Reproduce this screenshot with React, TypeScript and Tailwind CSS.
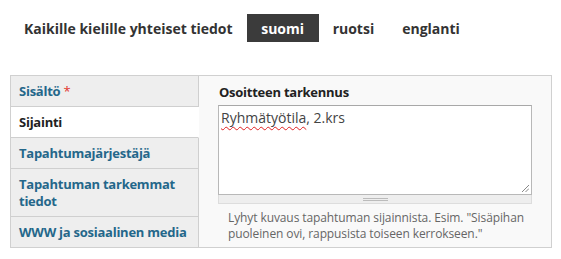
export default function App() {
  const tabs = [
    { label: "Sisältö", req: true },
    { label: "Sijainti", active: true },
    { label: "Tapahtumajärjestäjä" },
    { label: "Tapahtuman tarkemmat tiedot" },
    { label: "WWW ja sosiaalinen media" },
  ];
  return (
    <div className="w-[561px] h-[259px] bg-white font-['Open_Sans',sans-serif] overflow-hidden">
      <div className="flex items-center h-[28px] mt-[14px] pl-[24px] text-[14px] font-bold text-[#333]">
        <span>Kaikille kielille yhteiset tiedot</span>
        <span className="ml-[14px] h-full w-[72px] flex items-center justify-center bg-[#3b3b3b] text-white">suomi</span>
        <span className="ml-[14px]">ruotsi</span>
        <span className="ml-[28px]">englanti</span>
      </div>
      <div className="mt-[33px] ml-[10px] w-[542px] h-[173px] border border-[#d0d0d0] flex bg-[#f9f9f9]">
        <div className="w-[188px] flex flex-col shrink-0">
          {tabs.map((t, i) => (
            <div
              key={i}
              className={
                "pl-[8px] pr-[4px] pt-[7px] pb-[6px] text-[13px] leading-[17px] font-bold tracking-[-0.25px] " +
                (i < tabs.length - 1 ? "border-b border-[#cfcfcf] " : "") +
                (t.active
                  ? "bg-white text-[#222] border-r border-r-white"
                  : "bg-[#eeeeee] text-[#24678a] border-r border-r-[#cfcfcf]")
              }
            >
              {t.label}
              {t.req && <span className="text-[#e2342c] font-normal"> *</span>}
            </div>
          ))}
          <div className="flex-1 bg-[#eeeeee] border-r border-[#cfcfcf]" />
        </div>
        <div className="flex-1 pl-[19px] pr-[18px] pt-[8px]">
          <div className="text-[13px] leading-[17px] font-bold tracking-[-0.25px] text-[#222] mb-[4px] pl-[1px]">Osoitteen tarkennus</div>
          <div className="relative w-[314px] h-[90px] bg-white border border-[#b8b8b8] border-t-[#a8a8a8] px-[2px] pt-[2px] text-[14px] leading-[19px] text-[#444]">
            <span className="underline decoration-wavy decoration-[#e02020] decoration-[1px] underline-offset-[3px]">Ryhmätyötila</span>
            , 2.krs
            <svg className="absolute right-[2px] bottom-[2px]" width="8" height="8" viewBox="0 0 8 8">
              <line x1="1" y1="8" x2="8" y2="1" stroke="#888" strokeWidth="1" />
              <line x1="4.5" y1="8" x2="8" y2="4.5" stroke="#888" strokeWidth="1" />
            </svg>
          </div>
          <div className="w-[314px] h-[9px] bg-[#eeeeee] border border-t-0 border-[#dddddd] flex items-center justify-center">
            <div className="w-[25px] h-[3px] border-t border-b border-[#bbbbbb]" />
          </div>
          <div className="mt-[6px] pl-[10px] text-[12px] leading-[16px] tracking-[-0.1px] text-[#666]">
            Lyhyt kuvaus tapahtuman sijainnista. Esim. "Sisäpihan
            <br />
            puoleinen ovi, rappusista toiseen kerrokseen."
          </div>
        </div>
      </div>
    </div>
  );
}
